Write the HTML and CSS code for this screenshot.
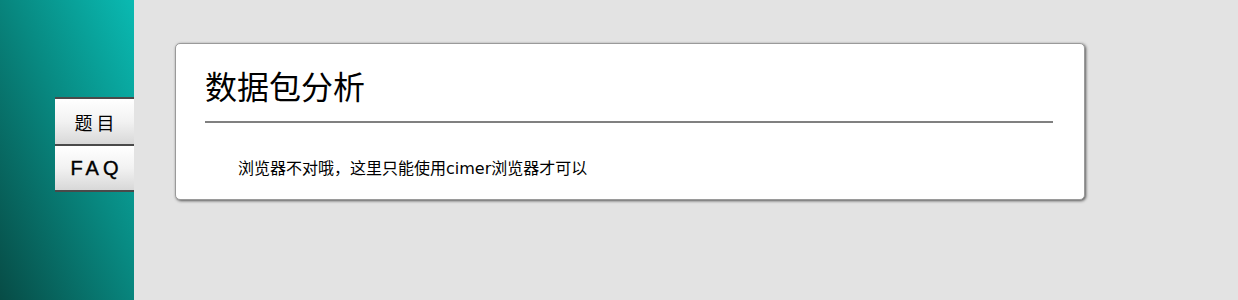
FILE: index.html
```html
<!DOCTYPE html>
<html>
<head>
<meta charset="utf-8">
<link rel="stylesheet" href="styles.css">
</head>
<body>
<div class="page">
  <aside class="sidebar">
    <nav class="menu">
      <div class="menu-item cn">题 目</div>
      <div class="menu-item en">FAQ</div>
    </nav>
  </aside>
  <main class="main">
    <section class="card">
      <h1 class="title">数据包分析</h1>
      <div class="rule"></div>
      <p class="msg">浏览器不对哦，这里只能使用cimer浏览器才可以</p>
    </section>
  </main>
</div>
</body>
</html>
```
FILE: styles.css
```css
html, body {
  margin: 0;
  padding: 0;
  height: 100%;
}
body {
  background: #e3e3e3;
  font-family: "DejaVu Sans", "Noto Sans CJK SC", sans-serif;
  color: #000;
}
.page {
  display: flex;
  height: 300px;
}
.sidebar {
  width: 134px;
  flex: none;
  background: linear-gradient(to bottom left, #0abab2 0%, #088a82 45%, #074c46 100%);
  display: flex;
  flex-direction: column;
  align-items: flex-end;
  padding-top: 97px;
  box-sizing: border-box;
}
.menu {
  width: 79px;
  border-top: 2px solid #4a4a4a;
}
.menu-item {
  height: 45px;
  border-bottom: 2px solid #4a4a4a;
  background: linear-gradient(to bottom, #ffffff 0%, #f2f2f2 50%, #d8d8d8 100%);
  display: flex;
  align-items: center;
  justify-content: center;
}
.menu-item.cn {
  font-size: 18px;
  font-family: "Noto Sans CJK SC", sans-serif;
}
.menu-item.en {
  font-size: 20px;
  letter-spacing: 4px;
  padding-left: 4px;
  padding-top: 1px;
  box-sizing: border-box;
  height: 46px;
  font-family: "Liberation Sans", sans-serif;
  -webkit-text-stroke: 0.4px #000;
}
.main {
  flex: 1;
  padding: 43px 0 0 41px;
}
.card {
  width: 848px;
  height: 155px;
  background: #fff;
  border: 1px solid #9a9a9a;
  border-radius: 5px;
  box-shadow: 1px 1px 3px #555;
  padding: 0 31px 0 29px;
}
.title {
  margin: 0;
  padding-top: 22px;
  font-size: 32px;
  font-weight: normal;
  line-height: 44px;
}
.rule {
  margin-top: 11px;
  height: 2px;
  background: #808080;
}
.msg {
  margin: 36px 0 0 33px;
  font-size: 16px;
  line-height: 20px;
}
```
